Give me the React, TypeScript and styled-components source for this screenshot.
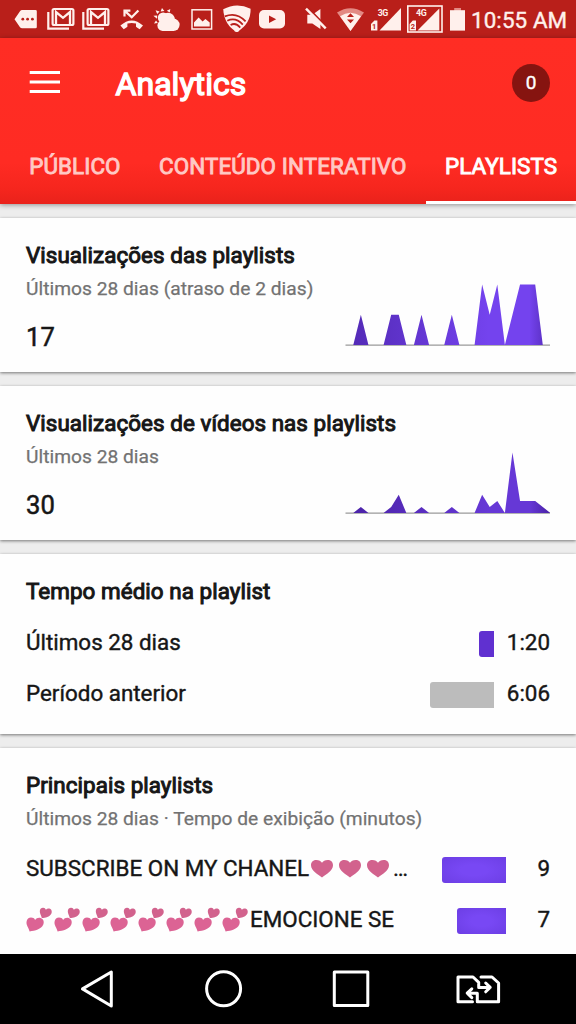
import React from "react";
import styled, { createGlobalStyle } from "styled-components";

const GlobalStyle = createGlobalStyle`
  * { box-sizing: border-box; }
  body { margin: 0; background: #ededed; font-family: Roboto, "Noto Sans", sans-serif; }
`;

const Screen = styled.div`
  width: 576px;
  height: 1024px;
  display: flex;
  flex-direction: column;
  overflow: hidden;
  background: #ededed;
  color: #161616;
`;

const StatusBar = styled.div`
  height: 38px;
  flex: none;
  display: flex;
  background: #b91f1a;
  color: #fff0ec;
  padding-left: 14px;
`;

const StatusSvg = styled.svg<{ $gap?: number }>`
  display: block;
  flex: none;
  margin-right: ${(p) => p.$gap ?? 0}px;
`;

const Clock = styled.span`
  font-size: 22.4px;
  line-height: 40px;
  letter-spacing: 0.1px;
  white-space: nowrap;
  -webkit-text-stroke: 0.4px currentColor;
`;

const Header = styled.header`
  height: 166px;
  flex: none;
  position: relative;
  z-index: 1;
  display: flex;
  flex-direction: column;
  background: linear-gradient(#ff2d24 0, #ff2b23 125px, #f6261e 150px, #e9221b 166px);
  color: #fff;
  box-shadow: 0 1px 5px rgba(0, 0, 0, 0.4);
`;

const Toolbar = styled.div`
  height: 90px;
  display: flex;
  align-items: center;
  padding: 0 26px 0 29px;
`;

const MenuButton = styled.button`
  border: 0;
  padding: 0;
  background: none;
  width: 32px;
  height: 26px;
  margin-top: -3px;
`;

const Title = styled.h1`
  margin: 2px 0 0 54.5px;
  flex: 1;
  font-size: 32px;
  font-weight: 400;
  letter-spacing: 0.05px;
  -webkit-text-stroke: 1.4px currentColor;
`;

const Counter = styled.span`
  width: 38px;
  height: 38px;
  margin-top: -1px;
  border-radius: 50%;
  background: #861410;
  display: flex;
  align-items: center;
  justify-content: center;
  font-size: 19px;
  -webkit-text-stroke: 0.4px currentColor;
`;

const Tabs = styled.nav`
  flex: 1;
  display: flex;
  padding-left: 10px;
`;

const Tab = styled.a<{ $active?: boolean }>`
  padding: 25px 19.2px 0;
  white-space: nowrap;
  font-size: 22.4px;
  line-height: 26px;
  letter-spacing: 0.1px;
  color: ${(p) => (p.$active ? "#fff" : "#ffc9c5")};
  border-bottom: 3px solid ${(p) => (p.$active ? "#fff" : "transparent")};
  -webkit-text-stroke: 0.9px currentColor;
`;

const Content = styled.main`
  flex: 1;
  min-height: 0;
  overflow: hidden;
  padding-top: 14px;
  display: flex;
  flex-direction: column;
  gap: 14px;
`;

const Card = styled.section<{ $height: number }>`
  height: ${(p) => p.$height}px;
  flex: none;
  padding: 24px 26px 0;
  background: #fefefe;
  box-shadow: 0 1px 3px rgba(0, 0, 0, 0.5);
`;

const CardTitle = styled.h2`
  margin: 0;
  font-size: 22.4px;
  line-height: 26px;
  font-weight: 400;
  letter-spacing: 0.06px;
  -webkit-text-stroke: 1px currentColor;
`;

const Subtitle = styled.p`
  margin: 9px 0 0;
  font-size: 19.2px;
  line-height: 24px;
  letter-spacing: 0.02px;
  color: #727272;
  -webkit-text-stroke: 0.25px currentColor;
`;

const Summary = styled.div`
  display: flex;
  justify-content: space-between;
`;

const Total = styled.div`
  margin-top: 19px;
  font-size: 25.6px;
  line-height: 34px;
  -webkit-text-stroke: 0.5px currentColor;
`;

const ChartSvg = styled.svg`
  flex: none;
  margin-top: -18px;
`;

const Row = styled.div<{ $top?: number }>`
  height: 26px;
  margin-top: ${(p) => p.$top ?? 25}px;
  display: flex;
  align-items: center;
  font-size: 22.4px;
  line-height: 26px;
  -webkit-text-stroke: 0.4px currentColor;
`;

const RowLabel = styled.span`
  flex: 1;
  display: flex;
  align-items: center;
  white-space: nowrap;
`;

const Bar = styled.span<{ $tone: "violet" | "deep" | "grey" }>`
  height: 26px;
  margin-top: 3px;
  border-radius: 3px 0 0 3px;
  background: ${(p) =>
    p.$tone === "grey"
      ? "#bcbcbc"
      : p.$tone === "deep"
        ? "#6030d0"
        : "radial-gradient(ellipse at center, #7848f4 30%, #6c3ee4 100%)"};
`;

const RowValue = styled.span<{ $width: number }>`
  width: ${(p) => p.$width}px;
  text-align: right;
`;

const Emoji = styled.svg`
  flex: none;
  display: block;
`;

const NavBar = styled.footer`
  height: 70px;
  flex: none;
  position: relative;
  z-index: 1;
  background: #000;
`;

const NavIcons = styled.div`
  height: 70px;
  padding-left: 80px;
  display: flex;
  align-items: center;
`;

const NavIcon = styled.svg<{ $gap?: number }>`
  flex: none;
  margin-right: ${(p) => p.$gap ?? 0}px;
  fill: none;
  stroke: #fff;
  stroke-width: 3;
  stroke-linejoin: round;
  stroke-linecap: round;
`;

const ink = "#fff0ec";
const barRed = "#b91f1a";

function MailIcon({ gap }: { gap: number }) {
  return (
    <StatusSvg width={28} height={38} viewBox="0 0 28 38" $gap={gap} fill="none" stroke={ink}>
      <path d="M1.3 12V28.6H22" strokeWidth="2.2" />
      <rect x="5.6" y="9" width="20.8" height="16" rx="1.5" strokeWidth="2.2" />
      <path d="M9 24V12L16 17.8L23 12V24" strokeWidth="2.3" />
    </StatusSvg>
  );
}

function StatusIcons() {
  return (
    <>
      <StatusSvg width={23} height={38} viewBox="0 0 23 38" $gap={10}>
        <path d="M.5 19.2L6 11.2Q6.8 10 8.2 10H21.5Q22.8 10 22.8 11.3V27Q22.8 28.3 21.5 28.3H8.2Q6.8 28.3 6 27.2Z" fill={ink} />
        <g fill={barRed}>
          <circle cx="8.8" cy="19.2" r="1.4" />
          <circle cx="13.6" cy="19.2" r="1.4" />
          <circle cx="18.4" cy="19.2" r="1.4" />
        </g>
      </StatusSvg>
      <MailIcon gap={7} />
      <MailIcon gap={10} />
      <StatusSvg width={24} height={38} viewBox="0 0 24 38" $gap={9} fill="none">
        <path d="M4.5 16.5V10.6H10.4M4.8 10.9L11.7 17.3L18.4 10.4" stroke={ink} strokeWidth="2.2" />
        <path d="M.4 25.6Q11.7 15.2 23 25.6L19.7 29.2Q17.5 28 16 26.8V23.6Q11.7 22.3 7.4 23.6V26.8Q5.8 28 3.7 29.2Z" fill={ink} />
      </StatusSvg>
      <StatusSvg width={28} height={38} viewBox="0 0 28 38" $gap={10} fill={ink}>
        <path d="M7.6 11.4L9 8L11.4 11ZM2.6 10.2L6.6 11.6L4.2 14ZM.4 15.8L4.2 15.4L4 18.8ZM1 23.6L3 20.6L4.8 23ZM13.8 10.8L17.3 9L16.8 12.4Z" />
        <circle cx="10.2" cy="17.8" r="5.4" />
        <circle cx="15" cy="19.6" r="6.9" />
        <circle cx="9.8" cy="25.5" r="5.4" />
        <circle cx="20.4" cy="24.8" r="6.2" />
        <rect x="9.5" y="22" width="11.5" height="9" />
      </StatusSvg>
      <StatusSvg width={22} height={38} viewBox="0 0 22 38" $gap={10}>
        <rect x="1" y="9.8" width="19.6" height="19.2" fill="none" stroke={ink} strokeWidth="1.5" />
        <path d="M3 26.6V22.4L7.6 17.4L11.6 21.4L14.4 19L18.7 22.6V26.6Z" fill={ink} />
      </StatusSvg>
      <StatusSvg width={28} height={38} viewBox="0 0 28 38" $gap={8}>
        <path d="M.2 9.2Q13.8 1.8 27.6 8.8Q28 23.8 14 32Q1.4 25.5.2 9.2Z" fill={ink} />
        <g fill="none" stroke={barRed} strokeWidth="1.8">
          <path d="M1.8 16.4Q13.5 11.6 22.6 21.4" />
          <path d="M4.3 20.8Q12.5 16.8 19.8 24.6" />
          <path d="M7.6 25Q12.8 22.2 17.2 27.6" />
        </g>
        <circle cx="13.7" cy="29.4" r="2.5" fill={ink} />
      </StatusSvg>
      <StatusSvg width={26} height={38} viewBox="0 0 26 38" $gap={20}>
        <rect x="0" y="10" width="26" height="18.4" rx="5" fill={ink} />
        <path d="M10 15.4L17.2 19.2L10 23Z" fill={barRed} />
      </StatusSvg>
      <StatusSvg width={22} height={38} viewBox="0 0 22 38" $gap={10}>
        <path d="M2.3 14.8H7.3L15.4 9V29L7.3 23.5H2.3Z" fill={ink} />
        <path d="M2.6 7.4L22 27.4" stroke={barRed} strokeWidth="2" />
        <path d="M1 8.6L20.7 28.4" stroke={ink} strokeWidth="2.5" />
      </StatusSvg>
      <StatusSvg width={27} height={38} viewBox="0 0 27 38" $gap={7}>
        <path d="M0 12.6Q13.4 3.8 27 12.6L13.5 31Z" fill="#e38a84" />
        <path d="M3 16.3Q13.4 9 24 16.3L13.5 31Z" fill={ink} />
        <path d="M13.5 13.3L17 17H10ZM13.5 23.3L17 19.6H10Z" fill={barRed} />
      </StatusSvg>
      <StatusSvg width={30} height={38} viewBox="0 0 30 38" $gap={6}>
        <path d="M8.5 30.4L30 8V30.4Z" fill={ink} />
        <path d="M0 30.4V24L3.4 20.5H6.4V30.4Z" fill={ink} />
        <text x="3.2" y="29" textAnchor="middle" fontSize="7.5" fontWeight="700" fill={barRed}>1</text>
        <text x="6.8" y="16.2" fontSize="8.8" fontWeight="700" fill={ink} textLength="10.5">3G</text>
      </StatusSvg>
      <StatusSvg width={36} height={38} viewBox="0 0 36 38" $gap={7}>
        <rect x=".8" y="6" width="34.2" height="26" fill="none" stroke={ink} strokeWidth="1.6" />
        <path d="M10.5 30.4L32.3 8.4V30.4Z" fill={ink} />
        <path d="M2.6 30.4V24L5.8 20.5H9V30.4Z" fill={ink} />
        <text x="5.9" y="29" textAnchor="middle" fontSize="7.5" fontWeight="700" fill={barRed}>2</text>
        <text x="9" y="16.2" fontSize="8.8" fontWeight="700" fill={ink} textLength="10.8">4G</text>
      </StatusSvg>
      <StatusSvg width={15} height={38} viewBox="0 0 15 38" $gap={6}>
        <rect x="4.2" y="8" width="6.8" height="3" fill="#e38a84" />
        <rect x="0" y="10.2" width="15" height="20.4" fill={ink} />
      </StatusSvg>
    </>
  );
}

const playlistViews = [0, 0, 1, 0, 0, 0, 1, 1, 0, 0, 1, 0, 0, 0, 1, 0, 0, 0, 2, 1, 2, 0, 1, 2, 2, 2, 0, 0];
const videoViews = [0, 0, 1, 0, 0, 0, 1, 3, 0, 0, 1, 0, 0, 0, 1, 0, 0, 0, 3, 1, 2, 0, 10, 2, 2, 2, 1, 0];

function AreaChart({ id, data, from, to }: { id: string; data: number[]; from: string; to: string }) {
  const max = Math.max(...data);
  const points = data.map((v, i) => `${(0.7 + i * 7.58).toFixed(2)},${(62 - (v / max) * 60.6).toFixed(2)}`).join(" ");
  return (
    <ChartSvg width={205} height={64} viewBox="0 0 205 64">
      <defs>
        <linearGradient id={id} gradientUnits="userSpaceOnUse" x1="0" y1="0" x2="205" y2="0">
          <stop offset="0" stopColor={from} />
          <stop offset=".7" stopColor={to} />
          <stop offset=".9" stopColor={to} />
          <stop offset="1" stopColor={from} />
        </linearGradient>
      </defs>
      <path d="M.5 62.2H205" stroke="#9a9a9a" strokeWidth="1.3" />
      <polygon points={`0.7,62 ${points} 205,62`} fill={`url(#${id})`} />
    </ChartSvg>
  );
}

function Heart() {
  return (
    <Emoji width={28} height={26} viewBox="0 0 28 26">
      <path d="M13 22.4C9 19.6 2 15.5 2 10.3C2 6.8 4.6 5 7.3 5C10 5 12 6.2 13 7.8C14 6.2 16 5 18.7 5C21.6 5 24 6.8 24 10.3C24 15.5 17 19.6 13 22.4Z" fill="#d2628d" />
    </Emoji>
  );
}

function TwoHearts() {
  return (
    <Emoji width={28} height={26} viewBox="0 0 28 26">
      <path d="M3.6 25.4C2.8 21.6.2 19.4.5 15.9C.8 13 2.9 11.6 5 11.6C6.9 11.6 8.3 12.4 9.1 13.9C10.4 12.1 12.6 11.2 14.7 12C17.3 13 18.5 15.6 17.3 18.5C15.2 23.4 9.2 24.6 3.6 25.4Z" fill="#dc6394" />
      <path d="M15.8 12C15.3 9.6 13.6 7.6 13.8 5C14 2.9 15.5 1.7 17.2 1.8C18.5 1.9 19.4 2.6 19.9 3.7C21 2.5 22.6 2.1 24 2.8C25.7 3.7 26.3 5.7 25.3 7.7C23.6 10.9 19.6 11.7 15.8 12Z" fill="#d2628d" />
    </Emoji>
  );
}

export default function App() {
  return (
    <Screen>
      <GlobalStyle />
      <StatusBar>
        <StatusIcons />
        <Clock>10:55 AM</Clock>
      </StatusBar>
      <Header>
        <Toolbar>
          <MenuButton aria-label="Menu">
            <svg width="32" height="26" viewBox="0 0 32 26" stroke="#fff" strokeWidth="3">
              <path d="M.7 3.5H31M.7 13H31M.7 22.5H31" />
            </svg>
          </MenuButton>
          <Title>Analytics</Title>
          <Counter>0</Counter>
        </Toolbar>
        <Tabs>
          <Tab>PÚBLICO</Tab>
          <Tab>CONTEÚDO INTERATIVO</Tab>
          <Tab $active>PLAYLISTS</Tab>
        </Tabs>
      </Header>
      <Content>
        <Card $height={154}>
          <CardTitle>Visualizações das playlists</CardTitle>
          <Subtitle>Últimos 28 dias (atraso de 2 dias)</Subtitle>
          <Summary>
            <Total>17</Total>
            <AreaChart id="playlist-area" data={playlistViews} from="#5229b4" to="#7443ee" />
          </Summary>
        </Card>
        <Card $height={154}>
          <CardTitle>Visualizações de vídeos nas playlists</CardTitle>
          <Subtitle>Últimos 28 dias</Subtitle>
          <Summary>
            <Total>30</Total>
            <AreaChart id="video-area" data={videoViews} from="#4a22a6" to="#6638d6" />
          </Summary>
        </Card>
        <Card $height={180}>
          <CardTitle>Tempo médio na playlist</CardTitle>
          <Row>
            <RowLabel>Últimos 28 dias</RowLabel>
            <Bar $tone="deep" style={{ width: 15 }} />
            <RowValue $width={56}>1:20</RowValue>
          </Row>
          <Row>
            <RowLabel>Período anterior</RowLabel>
            <Bar $tone="grey" style={{ width: 64 }} />
            <RowValue $width={56}>6:06</RowValue>
          </Row>
        </Card>
        <Card $height={220}>
          <CardTitle>Principais playlists</CardTitle>
          <Subtitle>Últimos 28 dias · Tempo de exibição (minutos)</Subtitle>
          <Row $top={24}>
            <RowLabel>
              SUBSCRIBE ON MY CHANEL
              <Heart />
              <Heart />
              <Heart />…
            </RowLabel>
            <Bar $tone="violet" style={{ width: 64 }} />
            <RowValue $width={44}>9</RowValue>
          </Row>
          <Row>
            <RowLabel>
              {Array.from({ length: 8 }, (_, i) => (
                <TwoHearts key={i} />
              ))}
              EMOCIONE SE
            </RowLabel>
            <Bar $tone="violet" style={{ width: 49 }} />
            <RowValue $width={44}>7</RowValue>
          </Row>
        </Card>
      </Content>
      <NavBar>
        <NavIcons>
          <NavIcon width={34} height={38} viewBox="0 0 34 38" $gap={90}>
            <path d="M2.5 18.9L31.3 2V36Z" />
          </NavIcon>
          <NavIcon width={40} height={38} viewBox="0 0 40 38" $gap={88}>
            <circle cx="19.6" cy="18.8" r="17" />
          </NavIcon>
          <NavIcon width={38} height={38} viewBox="0 0 38 38" $gap={85}>
            <rect x="2.3" y="2" width="33.5" height="33.5" />
          </NavIcon>
          <NavIcon width={46} height={38} viewBox="0 0 46 38">
            <path d="M17.5 31.7H3V7H18L23.7 12.3V17.4H35M30.7 13L35.2 17.4L30.7 21.8" />
            <path d="M26 7H37L43.6 13V31.7H22.3V23.2H12.5M16.8 18.8L12.2 23.2L16.8 27.6" />
          </NavIcon>
        </NavIcons>
      </NavBar>
    </Screen>
  );
}
